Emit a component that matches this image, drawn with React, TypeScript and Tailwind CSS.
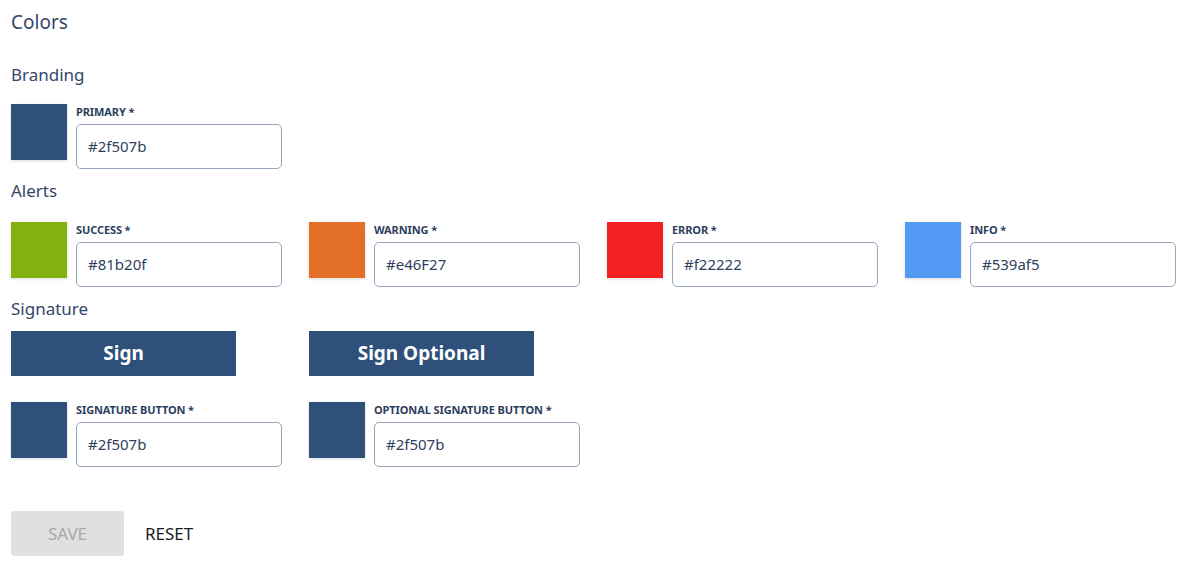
import React from "react";

const font = { fontFamily: '"Noto Sans", "Open Sans", sans-serif' };

function Field({ color, label, value }: { color: string; label: string; value: string }) {
  return (
    <div className="flex w-[271px] shrink-0 items-start">
      <div
        className="mt-0 h-[56px] w-[56px] shrink-0 shadow-[0_1px_3px_rgba(0,0,0,0.15)]"
        style={{ backgroundColor: color }}
      />
      <div className="ml-[9px] flex w-[206px] flex-col">
        <div className="mt-[1px] h-[19px] text-[11px] font-bold leading-[14px] tracking-[-0.1px] text-[#2c3e5c]">{label}</div>
        <div className="flex h-[45px] items-center rounded-[5px] border border-[#98a6bd] bg-white pl-[11px] text-[15px] text-[#2f3f5d]">
          {value}
        </div>
      </div>
    </div>
  );
}

export default function App() {
  return (
    <div className="min-h-[562px] bg-white pl-[11px] pt-[8px]" style={font}>
      <h1 className="text-[19px] leading-[28px] text-[#34456a]">Colors</h1>
      <h2 className="mt-[27px] text-[17px] leading-[24px] text-[#34456a]">Branding</h2>
      <div className="mt-[17px] flex">
        <Field color="#2f507b" label="PRIMARY *" value="#2f507b" />
      </div>
      <h2 className="mt-[10px] text-[17px] leading-[24px] text-[#34456a]">Alerts</h2>
      <div className="mt-[19px] flex gap-[27px]">
        <Field color="#81b20f" label="SUCCESS *" value="#81b20f" />
        <Field color="#e46f27" label="WARNING *" value="#e46F27" />
        <Field color="#f22222" label="ERROR *" value="#f22222" />
        <Field color="#539af5" label="INFO *" value="#539af5" />
      </div>
      <h2 className="mt-[10px] text-[17px] leading-[24px] text-[#34456a]">Signature</h2>
      <div className="mt-[10px] flex gap-[73px]">
        <div className="flex h-[45px] w-[225px] items-center justify-center bg-[#2f507b] text-[19px] font-bold text-white">Sign</div>
        <div className="flex h-[45px] w-[225px] items-center justify-center bg-[#2f507b] text-[19px] font-bold text-white">Sign Optional</div>
      </div>
      <div className="mt-[26px] flex gap-[27px]">
        <Field color="#2f507b" label="SIGNATURE BUTTON *" value="#2f507b" />
        <Field color="#2f507b" label="OPTIONAL SIGNATURE BUTTON *" value="#2f507b" />
      </div>
      <div className="mt-[44px] flex items-center">
        <div className="flex h-[45px] w-[113px] items-center justify-center rounded-[4px] bg-[#e0e0e0] text-[17px] text-[#a8a8a8]">SAVE</div>
        <div className="ml-[21px] text-[17px] text-[#1a1a1a]">RESET</div>
      </div>
    </div>
  );
}
